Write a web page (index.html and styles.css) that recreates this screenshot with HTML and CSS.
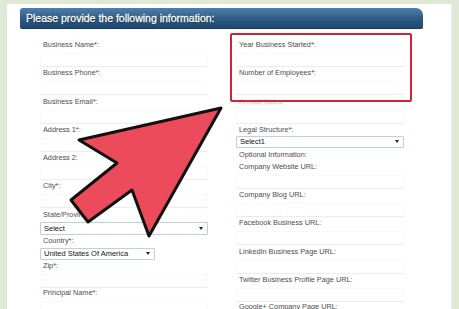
FILE: index.html
```html
<!DOCTYPE html>
<html lang="en">
<head>
    <meta charset="UTF-8">
    <meta name="viewport" content="width=device-width, initial-scale=1.0">
    <title>Business Information</title>
    <link rel="stylesheet" href="styles.css">
</head>
<body>
    <div class="screen">
        <div class="sheet">
            <div class="banner">Please provide the following information:</div>

            <form class="form">
                <div class="col">
                    <div class="field"><label>Business Name*:</label><div class="input"></div></div>
                    <div class="field"><label>Business Phone*:</label><div class="input"></div></div>
                    <div class="field"><label>Business Email*:</label><div class="input"></div></div>
                    <div class="field"><label>Address 1*:</label><div class="input"></div></div>
                    <div class="field"><label>Address 2:</label><div class="input"></div></div>
                    <div class="field"><label>City*:</label><div class="input"></div></div>
                    <div class="field pick"><label>State/Province*:</label><div class="select"><span>Select</span><i class="caret"></i></div></div>
                    <div class="field pick country"><label>Country*:</label><div class="select"><span>United States Of America</span><i class="caret"></i></div></div>
                    <div class="field zip"><label>Zip*:</label><div class="input"></div></div>
                    <div class="field"><label>Principal Name*:</label><div class="input"></div></div>
                </div>

                <div class="col">
                    <div class="field"><label>Year Business Started*:</label><div class="input"></div></div>
                    <div class="field"><label>Number of Employees*:</label><div class="input"></div></div>
                    <div class="field"><label class="faded">Annual Sales:</label><div class="input"></div></div>
                    <div class="field pick legal"><label>Legal Structure*:</label><div class="select"><span>Select1</span><i class="caret"></i></div></div>
                    <div class="note">Optional Information:</div>
                    <div class="field url"><label>Company Website URL:</label><div class="input"></div></div>
                    <div class="field url"><label>Company Blog URL:</label><div class="input"></div></div>
                    <div class="field url"><label>Facebook Business URL:</label><div class="input"></div></div>
                    <div class="field url"><label>LinkedIn Business Page URL:</label><div class="input"></div></div>
                    <div class="field url"><label>Twitter Business Profile Page URL:</label><div class="input"></div></div>
                    <div class="field url last"><label>Google+ Company Page URL:</label><div class="input"></div></div>
                </div>
            </form>
        </div>

        <!-- highlight box + pointer drawn over the form -->
        <div class="highlight"></div>
        <svg class="pointer" width="459" height="309" viewBox="0 0 459 309">
            <polygon points="221,108 79,140 117,163 71,200 88,222 132,190 149,236"
                     fill="#eb4b5b" stroke="#111" stroke-width="3" stroke-linejoin="round"/>
        </svg>
    </div>
</body>
</html>
```

FILE: styles.css
```css
:root {
    --col-page: #dfe9d5;
    --col-label: #4d4d4d;
    --col-line: #ececec;
    --col-select: #b9d3d6;
    --col-mark: #c9263b;
    --font-main: "Liberation Sans", Arial, sans-serif;
}

body {
    margin: 0;
    background: var(--col-page);
    font-family: var(--font-main);
}

.screen {
    position: relative;
    width: 459px;
    height: 309px;
    overflow: hidden;
}

.sheet {
    margin: 4px 7px 0 7px;
    height: 305px;
    background: #fff;
    border-right: 1px solid #e8edf2;
    box-sizing: border-box;
    overflow: hidden;
}

.banner {
    margin: 4px 28px 0 13px;
    height: 21px;
    padding-left: 6px;
    border-radius: 3px 7px 2px 2px;
    border-bottom: 1px solid #173a5a;
    box-sizing: border-box;
    background: linear-gradient(#4f7fab, #2c5a85 55%, #1e4870);
    color: #fff;
    font-size: 10.5px;
    line-height: 20px;
    -webkit-text-stroke: 0.3px #fff;
    text-shadow: 0 0 1px #0c2640, 0 1px 1px #0c2640;
}

.form {
    display: grid;
    grid-template-columns: 168px 168px;
    column-gap: 28px;
    padding: 10px 0 0 33px;
}

.field {
    height: 28.3px;
}

.field label,
.note {
    display: block;
    height: 12px;
    padding-left: 3px;
    font-size: 7.3px;
    line-height: 12px;
    color: var(--col-label);
}

.field label.faded {
    color: #d2d2d2;
    text-shadow: 0 0 2px #e0e0e0;
}

.note {
    height: 13px;
    line-height: 13px;
}

.input {
    height: 14px;
    margin-top: 2px;
    border: 1px solid #f9f9f9;
    border-bottom-color: var(--col-line);
    box-sizing: border-box;
}

.field.pick {
    height: 26px;
}

.field.country {
    height: 25px;
}

.field.zip {
    height: 27px;
}

.field.legal {
    height: 24px;
}

.field.url {
    height: 28.3px;
}

.field.last label {
    line-height: 10px;
}

.select {
    display: flex;
    align-items: center;
    justify-content: space-between;
    height: 13px;
    margin-top: 1px;
    padding: 0 4px 0 3px;
    border: 1px solid var(--col-select);
    border-radius: 1px;
    box-sizing: border-box;
    background: #fff;
    font-size: 7.5px;
    color: #151515;
}

.country .select {
    width: 115px;
    height: 12px;
}

.legal .select {
    height: 12px;
    margin-top: 0;
}

.caret {
    width: 0;
    height: 0;
    border-top: 3px solid #222;
    border-left: 2px solid transparent;
    border-right: 2px solid transparent;
}

.highlight {
    position: absolute;
    left: 230px;
    top: 33px;
    width: 182px;
    height: 69px;
    border: 2px solid var(--col-mark);
    border-radius: 2px;
    box-sizing: border-box;
}

.pointer {
    position: absolute;
    left: 0;
    top: 0;
}
```
